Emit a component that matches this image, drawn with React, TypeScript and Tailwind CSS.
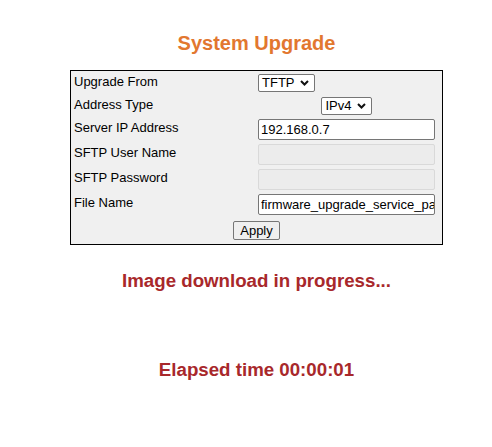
import React from "react";

function Chevron() {
  return (
    <svg width="9" height="6" viewBox="0 0 9 6" className="ml-[5px]">
      <path d="M1 1 L4.5 4.5 L8 1" fill="none" stroke="#111" strokeWidth="2" />
    </svg>
  );
}

function FakeSelect({ value }: { value: string }) {
  return (
    <div className="inline-flex h-[18px] items-center rounded-[2px] border border-[#767676] bg-white pl-[3px] pr-[5px] text-[13px] leading-none text-black">
      {value}
      <Chevron />
    </div>
  );
}

function TextBox({ value, disabled }: { value?: string; disabled?: boolean }) {
  return (
    <input
      readOnly
      disabled={disabled}
      value={value ?? ""}
      className={
        disabled
          ? "h-[21px] w-[177px] rounded-[2px] border border-[#d9d9d9] bg-[#ececec] outline-none"
          : "h-[21px] w-[177px] rounded-[2px] border border-[#767676] bg-white pl-[2px] text-[13px] text-black outline-none"
      }
    />
  );
}

const rows: { label: string; h: string; pad: string; field: React.ReactNode }[] = [
  { label: "Upgrade From", h: "h-[23px]", pad: "pb-[2px]", field: <FakeSelect value="TFTP" /> },
  {
    label: "Address Type",
    h: "h-[23px]",
    pad: "pb-[2px]",
    field: (
      <div className="flex w-[177px] justify-center">
        <FakeSelect value="IPv4" />
      </div>
    ),
  },
  { label: "Server IP Address", h: "h-[25px]", pad: "pb-[4px]", field: <TextBox value="192.168.0.7" /> },
  { label: "SFTP User Name", h: "h-[25px]", pad: "pb-[4px]", field: <TextBox disabled /> },
  { label: "SFTP Password", h: "h-[25px]", pad: "pb-[4px]", field: <TextBox disabled /> },
  { label: "File Name", h: "h-[25px]", pad: "pb-[4px]", field: <TextBox value="firmware_upgrade_service_pack.bin" /> },
];

export default function App() {
  return (
    <div className="min-h-[447px] bg-white pl-[21px] font-['Liberation_Sans',Arial,sans-serif]">
      <h1 className="pt-[31px] text-center text-[20px] font-bold leading-[24px] text-[#e2772f]">
        System Upgrade
      </h1>
      <div className="mx-auto mt-[15px] w-[373px] border border-black bg-[#f0f0f0]">
        {rows.map((r) => (
          <div key={r.label} className={`flex items-center ${r.h}`}>
            <div className={`w-[187px] pl-[3px] text-[13px] text-black ${r.pad}`}>{r.label}</div>
            <div className="flex flex-1 items-center">{r.field}</div>
          </div>
        ))}
        <div className="flex h-[27px] items-center justify-center">
          <div className="flex h-[19px] items-center rounded-[2px] border border-[#767676] bg-[#efefef] px-[6px] text-[13px] text-black">
            Apply
          </div>
        </div>
      </div>
      <p className="mt-[25px] text-center text-[18.7px] font-bold leading-[22px] text-[#a8282b]">
        Image download in progress...
      </p>
      <p className="mt-[67px] text-center text-[18.7px] font-bold leading-[22px] text-[#a8282b]">
        Elapsed time 00:00:01
      </p>
    </div>
  );
}
